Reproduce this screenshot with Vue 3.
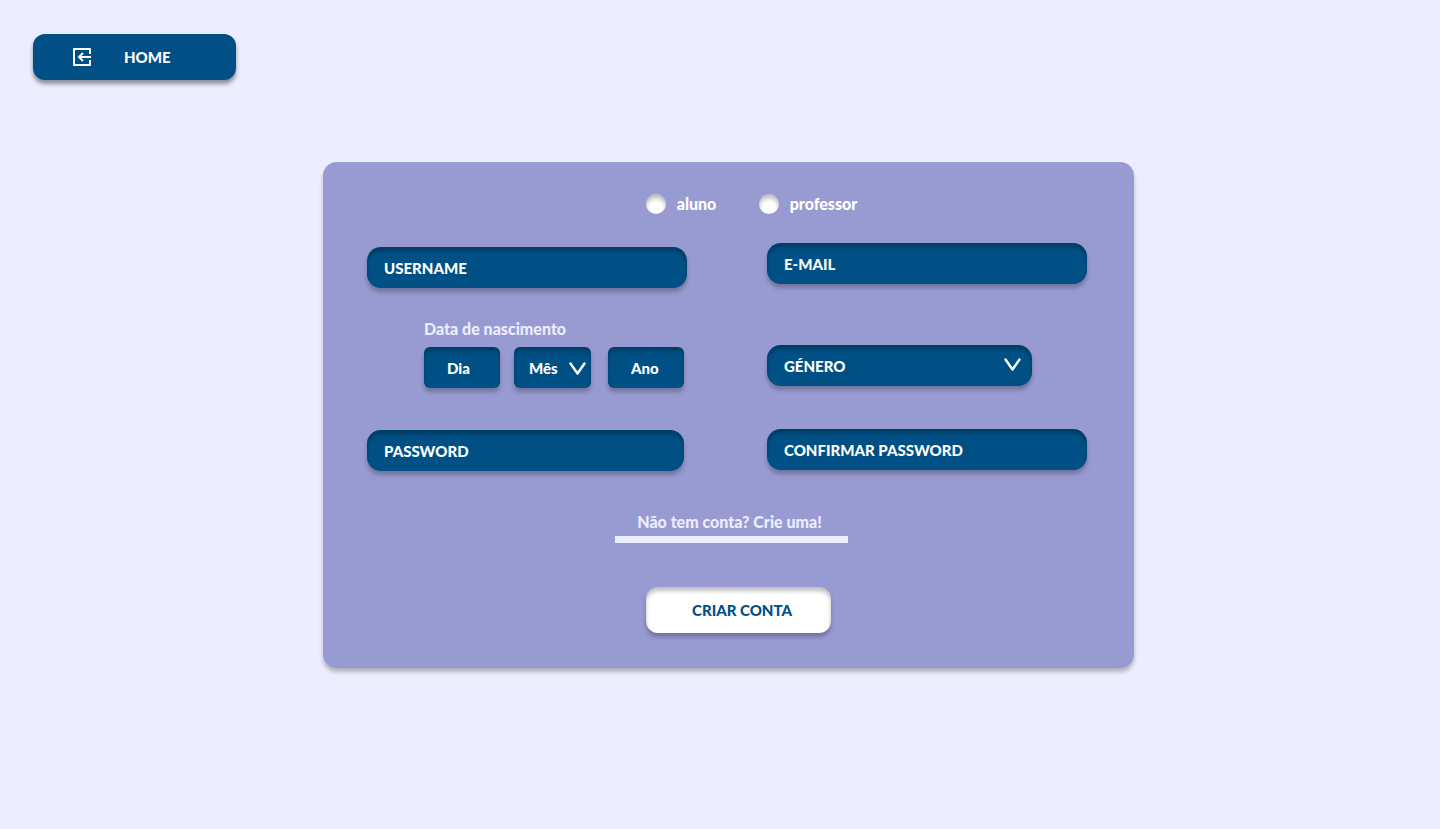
<script setup>
import { reactive } from 'vue'

const form = reactive({
  role: '',
  username: '',
  email: '',
  day: '',
  month: '',
  year: '',
  gender: '',
  password: '',
  confirm: ''
})
</script>

<template>
  <div class="page">
    <nav>
      <a class="home" href="#">
        <svg width="18" height="18" viewBox="0 0 18 18" fill="none" stroke="currentColor" stroke-width="2" aria-hidden="true">
          <path d="M17 6V1H1V17H17V12" stroke-linejoin="round" />
          <path d="M18 9H6M10 5L6 9L10 13" />
        </svg>
        <span>HOME</span>
      </a>
    </nav>

    <main>
      <form class="card" @submit.prevent>
        <div class="roles">
          <label class="role"><input v-model="form.role" type="radio" name="role" value="aluno" />aluno</label>
          <label class="role"><input v-model="form.role" type="radio" name="role" value="professor" />professor</label>
        </div>

        <div class="columns">
          <div class="column left">
            <input v-model="form.username" class="field" type="text" placeholder="USERNAME" aria-label="Username" />
            <fieldset class="birth">
              <legend>Data de nascimento</legend>
              <div class="date">
                <input v-model="form.day" class="field small" type="text" placeholder="Dia" aria-label="Dia" />
                <div class="pick month">
                  <select v-model="form.month" class="field small" aria-label="Mês">
                    <option value="">Mês</option>
                  </select>
                  <svg class="chevron" width="17" height="14" viewBox="0 0 17 14" aria-hidden="true"><path d="M1.5 1.5L8.5 11.5L15.5 1.5" /></svg>
                </div>
                <input v-model="form.year" class="field small year" type="text" placeholder="Ano" aria-label="Ano" />
              </div>
            </fieldset>
            <input v-model="form.password" class="field password" type="password" placeholder="PASSWORD" aria-label="Password" />
          </div>

          <div class="column right">
            <input v-model="form.email" class="field" type="email" placeholder="E-MAIL" aria-label="E-mail" />
            <div class="pick gender">
              <select v-model="form.gender" class="field" aria-label="Género">
                <option value="">GÉNERO</option>
              </select>
              <svg class="chevron" width="17" height="14" viewBox="0 0 17 14" aria-hidden="true"><path d="M1.5 1.5L8.5 11.5L15.5 1.5" /></svg>
            </div>
            <input v-model="form.confirm" class="field" type="password" placeholder="CONFIRMAR PASSWORD" aria-label="Confirmar password" />
          </div>
        </div>

        <a class="signup" href="#">Não tem conta? Crie uma!</a>
        <button class="submit" type="submit">CRIAR CONTA</button>
      </form>
    </main>
  </div>
</template>

<style>
body {
  background: #ecedff;
}
</style>

<style scoped>
.page,
.page * {
  box-sizing: border-box;
}
.page {
  min-height: 100vh;
  padding: 34px 33px;
  font: 900 15px/18px Lato, sans-serif;
  color: #fff;
}
nav {
  display: flex;
}
.home {
  display: flex;
  align-items: center;
  gap: 33px;
  min-width: 203px;
  padding: 14px 40px;
  border-radius: 12px;
  background: #005086;
  box-shadow: 0 4px 4px rgba(0, 0, 0, 0.4);
  color: #fff;
  text-decoration: none;
}
main {
  display: flex;
  justify-content: center;
  margin-top: 82px;
  padding-left: 17px;
}
.card {
  display: flex;
  flex-direction: column;
  align-items: center;
  width: 100%;
  max-width: 811px;
  padding: 32px 47px 35px 44px;
  border-radius: 14px;
  background: #989bd2;
  box-shadow: 0 4px 4px rgba(0, 0, 0, 0.25);
}
.roles {
  display: grid;
  grid-template-columns: 113px auto;
  margin-left: 49px;
}
.role {
  display: flex;
  align-items: center;
  gap: 11px;
  font-size: 16px;
}
.role input {
  appearance: none;
  width: 20px;
  height: 20px;
  margin: 0;
  border-radius: 50%;
  background: #fff;
  box-shadow: inset 0 4px 4px rgba(0, 0, 0, 0.25);
}
.role input:checked {
  border: 6px solid #005086;
}
.columns {
  display: grid;
  grid-template-columns: 1fr 1fr;
  gap: 80px;
  width: 100%;
  margin-top: 29px;
}
.column {
  display: flex;
  flex-direction: column;
}
.left {
  padding-top: 4px;
}
.field {
  display: block;
  width: 100%;
  height: 41px;
  margin: 0;
  padding: 0 17px;
  appearance: none;
  border: 0;
  border-radius: 14px;
  background: #005086;
  box-shadow: 0 4px 4px rgba(0, 0, 0, 0.25), inset 0 4px 4px rgba(0, 0, 0, 0.25);
  font: inherit;
  color: #fff;
}
.field::placeholder {
  color: #fff;
  opacity: 1;
}
.birth {
  min-width: 0;
  margin: 32px 3px 42px 57px;
  padding: 0;
  border: 0;
}
.birth legend {
  padding: 0;
  font-size: 16px;
  color: #ecedff;
}
.date {
  display: grid;
  grid-template-columns: 76fr 77fr 79fr;
  gap: 14px;
  margin-top: 9px;
}
.date > * {
  min-width: 0;
}
.small {
  padding: 0 0 0 23px;
  border-radius: 6px;
}
.month .small {
  padding-left: 15px;
}
.year {
  justify-self: end;
  width: calc(100% - 3px);
}
.password {
  width: calc(100% - 3px);
}
.pick {
  position: relative;
}
.gender {
  width: 265px;
  max-width: 100%;
  margin: 61px 0 43px;
}
.chevron {
  position: absolute;
  top: 13px;
  right: 11px;
  fill: none;
  stroke: #fff;
  stroke-width: 2.4;
  stroke-linecap: round;
  stroke-linejoin: round;
  pointer-events: none;
}
.month .chevron {
  top: 15px;
  right: 5px;
}
.signup {
  width: 233px;
  margin: 42px 0 0 9px;
  padding: 0 4px 5px 0;
  border-bottom: 7px solid #ecedff;
  font-size: 16px;
  color: #ecedff;
  text-align: center;
  text-decoration: none;
}
.submit {
  margin: 44px 0 0 23px;
  min-width: 185px;
  padding: 14px 38px 14px 46px;
  border: 0;
  border-radius: 12px;
  background: #fff;
  box-shadow: 0 4px 4px rgba(0, 0, 0, 0.25), inset 0 4px 4px rgba(0, 0, 0, 0.25);
  font: inherit;
  color: #005086;
  text-align: left;
}
</style>
